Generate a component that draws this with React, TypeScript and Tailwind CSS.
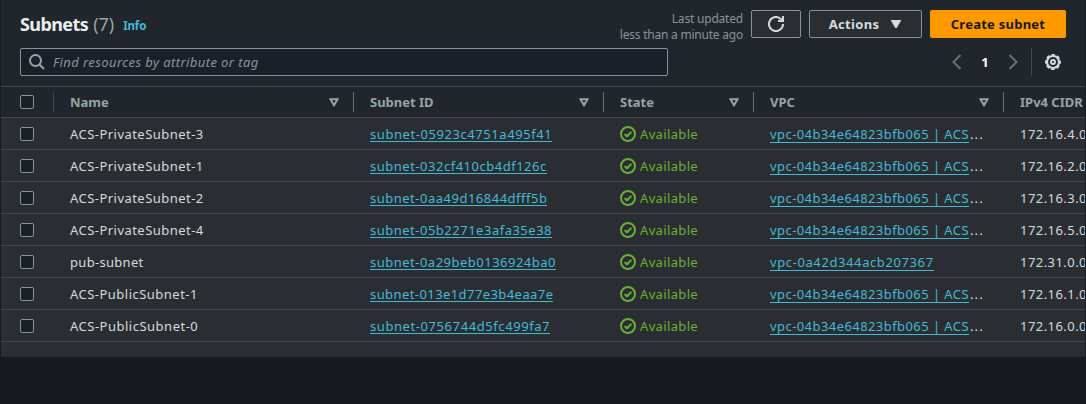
import React from 'react';

type Subnet = {
  name: string;
  nameClass: string;
  id: string;
  idClass: string;
  vpc: string;
  vpcClass: string;
  cut: boolean;
  cidr: string;
};

const ACS_VPC = { vpc: 'vpc-04b34e64823bfb065 | ACS', vpcClass: 'tracking-[0.43px]', cut: true };

const subnets: Subnet[] = [
  { name: 'ACS-PrivateSubnet-3', nameClass: 'tracking-[0.46px]', id: 'subnet-05923c4751a495f41', idClass: 'tracking-[0.57px]', ...ACS_VPC, cidr: '172.16.4.0' },
  { name: 'ACS-PrivateSubnet-1', nameClass: 'tracking-[0.46px]', id: 'subnet-032cf410cb4df126c', idClass: 'tracking-[0.51px]', ...ACS_VPC, cidr: '172.16.2.0' },
  { name: 'ACS-PrivateSubnet-2', nameClass: 'tracking-[0.46px]', id: 'subnet-0aa49d16844dfff5b', idClass: 'tracking-[0.5px]', ...ACS_VPC, cidr: '172.16.3.0' },
  { name: 'ACS-PrivateSubnet-4', nameClass: 'tracking-[0.46px]', id: 'subnet-05b2271e3afa35e38', idClass: 'tracking-[0.5px]', ...ACS_VPC, cidr: '172.16.5.0' },
  { name: 'pub-subnet', nameClass: 'tracking-[0.3px]', id: 'subnet-0a29beb0136924ba0', idClass: 'tracking-[0.49px]', vpc: 'vpc-0a42d344acb207367', vpcClass: 'tracking-[0.6px]', cut: false, cidr: '172.31.0.0' },
  { name: 'ACS-PublicSubnet-1', nameClass: 'tracking-[0.48px]', id: 'subnet-013e1d77e3b4eaa7e', idClass: 'tracking-[0.42px]', ...ACS_VPC, cidr: '172.16.1.0' },
  { name: 'ACS-PublicSubnet-0', nameClass: 'tracking-[0.5px]', id: 'subnet-0756744d5fc499fa7', idClass: 'tracking-[0.58px]', ...ACS_VPC, cidr: '172.16.0.0' },
];

const columns = 'grid grid-cols-[52px_300px_250px_150px_250px_82px]';

function Checkbox() {
  return <span className="ml-[19px] block size-[14px] rounded-[2px] border border-[#879596] bg-[#1a2029]" />;
}

function HeaderCell({ label, sortable = true }: { label: string; sortable?: boolean }) {
  return (
    <div className="flex h-[20px] items-center justify-between border-l border-[#687078] pr-[14px] pl-[16px] first-of-type:border-[#414750]">
      <span className="whitespace-nowrap pt-px">{label}</span>
      {sortable && (
        <svg width="10" height="9" viewBox="0 0 10 9" className="shrink-0" fill="none" stroke="#95a5a6" strokeWidth="2">
          <path d="M1.4 1.2h7.2L5 7.2z" />
        </svg>
      )}
    </div>
  );
}

function StatusIcon() {
  return (
    <svg width="16" height="16" viewBox="0 0 16 16" fill="none" stroke="#6aaf35" strokeWidth="2" className="shrink-0">
      <circle cx="8" cy="8" r="7" />
      <path d="m4.6 8 2.4 2.3L11.300 6" />
    </svg>
  );
}

export default function App() {
  return (
    <div className="h-[404px] w-[1086px] overflow-hidden bg-[#161920] font-['Noto_Sans','Open_Sans',sans-serif] text-[13px] text-[#d5dbdb]">
      <section className="h-[357px] border-x border-x-[#181b21] bg-[#2a2e33]">
        <header className="h-[87px] border-b border-[#414750] bg-[#21252c] pt-[10px] pr-[19px] pl-[19px]">
          <div className="flex h-[28px] items-start">
            <h1 className="mt-px text-[18px] leading-[26px] font-bold tracking-[-0.6px] text-[#eaeded]">
              Subnets <span className="ml-px font-normal tracking-[-0.05px] text-[#95a5a6]">(7)</span>
            </h1>
            <span className="mt-[7px] ml-[9px] text-[11.5px] leading-[18px] font-bold tracking-[-0.1px] text-[#44b9d6]">Info</span>
            <div className="ml-auto text-right text-[12px] leading-[16px] text-[#879596]">
              <div className="mt-[1px] tracking-[-0.2px]">Last updated</div>
              <div className="whitespace-nowrap tracking-[-0.22px]">less than a minute ago</div>
            </div>
            <button className="ml-[8px] flex h-[28px] w-[50px] items-center justify-center rounded-[2px] border border-[#879596] bg-[#2a2e33]">
              <svg width="16" height="16" viewBox="0 0 16 16" fill="none" stroke="#d5dbdb" strokeWidth="2">
                <path d="M15 0v5h-5M15 8a7 7 0 1 1-2-4.9L14.8 5" />
              </svg>
            </button>
            <button className="ml-[8px] flex h-[28px] w-[113px] items-center justify-center gap-[11px] rounded-[2px] border border-[#879596] bg-[#2a2e33] pt-px font-bold tracking-[0.3px]">
              Actions
              <svg width="12" height="8" viewBox="0 0 12 8" className="-mt-px" fill="#d5dbdb"><path d="M.6 0h10.800L6.700 8H5.300z" /></svg>
            </button>
            <button className="ml-[8px] h-[28px] w-[136px] rounded-[2px] bg-[#ff9900] pt-px font-bold tracking-[0.25px] text-[#16191f]">Create subnet</button>
          </div>
          <div className="mt-[10px] flex h-[28px] items-center">
            <div className="flex h-[28px] w-[648px] items-center rounded-[2px] border border-[#879596] bg-[#1a2029] pl-[8px]">
              <svg width="16" height="16" viewBox="0 0 16 16" fill="none" stroke="#95a5a6" strokeWidth="2">
                <circle cx="6.5" cy="6.5" r="5.5" />
                <path d="m10.500 10.500 4.500 4.500" />
              </svg>
              <span className="ml-[8px] pt-px tracking-[0.41px] text-[#879596] italic">Find resources by attribute or tag</span>
            </div>
            <div className="ml-auto flex items-center">
              <svg width="10" height="16" viewBox="0 0 10 16" fill="none" stroke="#687078" strokeWidth="2"><path d="M8.5 1 1.5 8l7 7" /></svg>
              <span className="w-[46px] pt-px text-center font-bold text-[#fafafa]">1</span>
              <svg width="10" height="16" viewBox="0 0 10 16" fill="none" stroke="#687078" strokeWidth="2"><path d="m1.5 1 7 7-7 7" /></svg>
              <span className="ml-[13px] h-[28px] w-px bg-[#414750]" />
              <svg width="16" height="16" viewBox="0 0 16 16" className="mr-[5px] ml-[13px]" fill="none" stroke="#d5dbdb">
                <circle cx="8" cy="8" r="6" strokeWidth="2.2" />
                <circle cx="8" cy="8" r="7.3" strokeWidth="1.4" strokeDasharray="3.6 2.134" strokeDashoffset="1.8" />
                <circle cx="8" cy="8" r="2" strokeWidth="2" />
              </svg>
            </div>
          </div>
        </header>
        <div className={`${columns} h-[31px] items-center border-b border-[#414750] bg-[#21252c] font-bold text-[#95a5a6]`}>
          <Checkbox />
          <HeaderCell label="Name" />
          <HeaderCell label="Subnet ID" />
          <HeaderCell label="State" />
          <HeaderCell label="VPC" />
          <HeaderCell label="IPv4 CIDR" sortable={false} />
        </div>
        {subnets.map((s) => (
          <div key={s.id} className={`${columns} h-[32px] items-center border-b border-[#414750] leading-[20px] whitespace-nowrap`}>
            <Checkbox />
            <span className={`pl-[17px] ${s.nameClass}`}>{s.name}</span>
            <span className="pl-[17px]">
              <a className={`inline-block h-[16px] border-b border-[#44b9d6] leading-[16px] text-[#44b9d6] ${s.idClass}`}>{s.id}</a>
            </span>
            <span className="flex items-center gap-[4px] pl-[17px] tracking-[0.35px] text-[#6aaf35]">
              <StatusIcon />
              Available
            </span>
            <span className="pl-[17px]">
              <a className={`inline-block h-[17px] border-b border-[#44b9d6] leading-[17px] text-[#44b9d6] ${s.vpcClass}`}>{s.vpc}</a>
              {s.cut && <span className="ml-px tracking-[1.1px]">...</span>}
            </span>
            <span className="overflow-hidden pl-[17px] tracking-[0.45px]">{s.cidr}</span>
          </div>
        ))}
      </section>
    </div>
  );
}
